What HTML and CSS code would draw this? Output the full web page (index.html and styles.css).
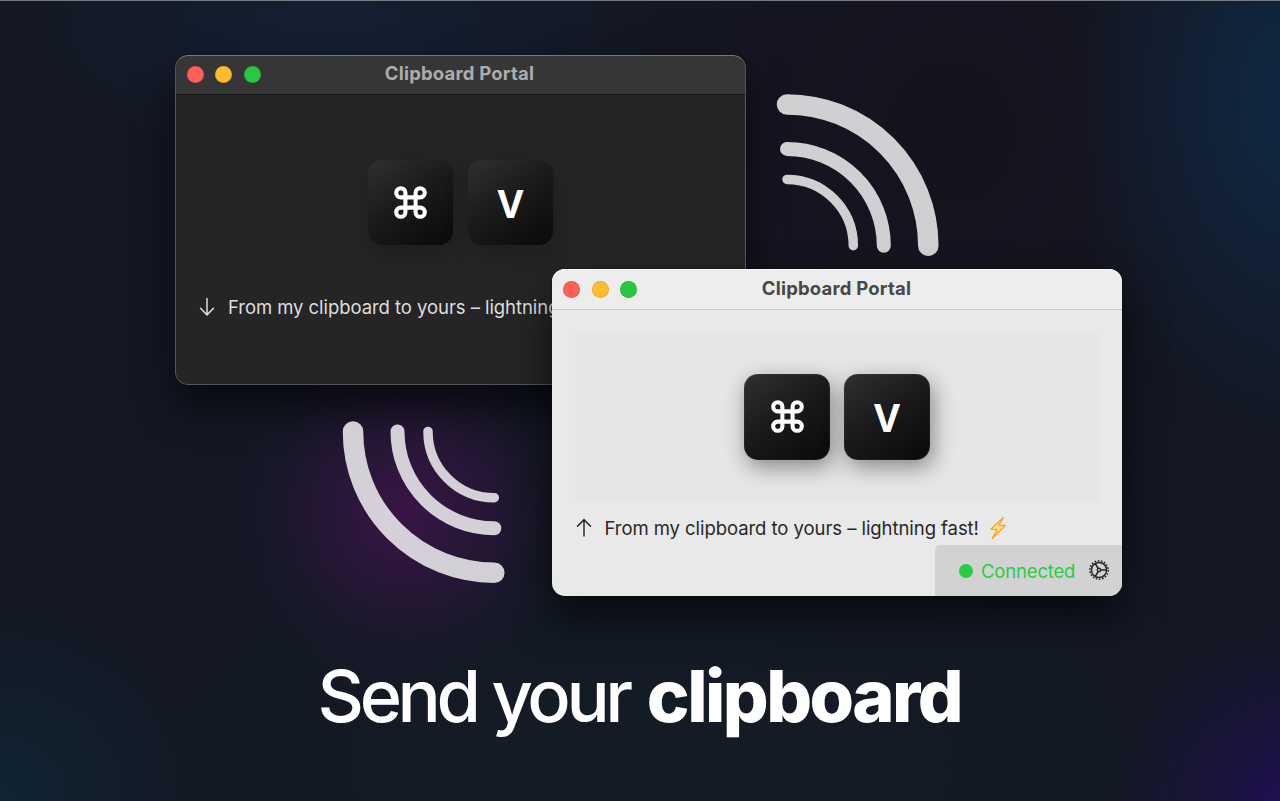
FILE: index.html
```html
<!DOCTYPE html>
<html lang="en">
<head>
<meta charset="utf-8">
<title>Clipboard Portal</title>
<link rel="stylesheet" href="styles.css">
</head>
<body>
<svg class="defs" width="0" height="0" aria-hidden="true">
  <symbol id="command" viewBox="0 0 33 33"><path d="M11.4 6.8a4.6 4.6 0 1 0-4.6 4.6H26.2a4.6 4.6 0 1 0-4.6-4.6V26.2a4.6 4.6 0 1 0 4.6-4.6H6.8a4.6 4.6 0 1 0 4.6 4.6Z" fill="none" stroke="#fff" stroke-width="4.1"/></symbol>
</svg>
<main class="desktop">
  <section class="window dark">
    <header class="titlebar">
      <div class="lights"><i class="red"></i><i class="yellow"></i><i class="green"></i></div>
      <h2 class="title"><span>Clipboard Portal</span></h2>
    </header>
    <div class="preview">
      <div class="key"><svg class="cmd"><use href="#command"/></svg></div>
      <div class="key"><span>V</span></div>
    </div>
    <div class="message">
      <svg class="arrow" viewBox="0 0 16 20"><path d="M8 1.5V17.5M1.5 11.3L8 17.9L14.5 11.3"/></svg>
      <span class="text">From my clipboard to yours – lightning fast!</span>
    </div>
  </section>

  <svg class="waves waves-top" viewBox="0 0 164 164"><path d="M11 11.400A141.300 141.300 0 0 1 152.300 152.700" stroke-width="20.500"/><path d="M11 55.900A96.800 96.800 0 0 1 107.800 152.700" stroke-width="14"/><path d="M11 86.400A66.300 66.300 0 0 1 77.300 152.700" stroke-width="9.500"/></svg>
  <svg class="waves waves-bottom" viewBox="0 0 164 164"><path d="M11 11.400A141.300 141.300 0 0 0 152.300 152.700" stroke-width="20.500"/><path d="M55.500 11.400A96.800 96.800 0 0 0 152.300 108.200" stroke-width="14"/><path d="M86 11.400A66.300 66.300 0 0 0 152.300 77.700" stroke-width="9.500"/></svg>

  <section class="window light">
    <header class="titlebar">
      <div class="lights"><i class="red"></i><i class="yellow"></i><i class="green"></i></div>
      <h2 class="title"><span>Clipboard Portal</span></h2>
    </header>
    <div class="preview">
      <div class="key"><svg class="cmd"><use href="#command"/></svg></div>
      <div class="key"><span>V</span></div>
    </div>
    <div class="message">
      <svg class="arrow" viewBox="0 0 16 20"><path d="M8 18V2M1.500 8.200L8 1.600L14.500 8.200"/></svg>
      <span class="text">From my clipboard to yours – lightning fast!</span>
      <svg class="bolt" viewBox="0 0 18 24"><path d="M14.500 1.500L1.800 13.200L8 13.700L3.200 22.500L16.300 9.600L9.800 9.200Z"/></svg>
    </div>
    <footer class="status">
      <i class="dot"></i>
      <span class="state">Connected</span>
      <svg class="gear" viewBox="0 0 20 20"><circle class="teeth" cx="10" cy="10" r="9.200"/><circle cx="10" cy="10" r="7.600"/><circle cx="10" cy="10" r="1.700"/><path d="M11.700 10H17.500M9.200 8.500L6.200 3.500M9.200 11.500L6.200 16.500"/></svg>
    </footer>
  </section>

  <h1 class="headline"><span class="lead">Send your</span><strong>clipboard</strong></h1>
</main>
</body>
</html>
```
FILE: styles.css
```css
* { box-sizing: border-box; }
body { margin: 0; font-family: Inter, "Liberation Sans", sans-serif; }
.defs { position: absolute; }
.desktop {
  position: relative;
  width: 1280px;
  height: 801px;
  overflow: hidden;
  border-top: 1px solid #757a83;
  background:
    radial-gradient(circle 175px at 405px 510px, rgba(58, 21, 71, .95), rgba(54, 21, 68, .6) 40%, rgba(46, 21, 60, .2) 75%, transparent),
    radial-gradient(ellipse 220px 330px at 1290px 100px, #102842, rgba(16, 38, 62, .65) 45%, transparent),
    radial-gradient(circle 180px at 1295px 805px, #200f54, rgba(30, 16, 76, .5) 50%, transparent),
    radial-gradient(circle 200px at 0 800px, #102433, transparent),
    radial-gradient(ellipse 300px 130px at 330px 20px, #142033, transparent),
    radial-gradient(ellipse 380px 420px at 950px 130px, #16121d, transparent),
    radial-gradient(ellipse 600px 280px at 650px 760px, #131c26, transparent),
    #131824;
}
.window {
  position: absolute;
  display: flex;
  flex-direction: column;
  width: 570px;
  border-radius: 13px;
  overflow: hidden;
}
.window::after {
  content: "";
  position: absolute;
  inset: 0;
  border-radius: inherit;
  pointer-events: none;
}
.dark {
  left: 175px;
  top: 54px;
  width: 571px;
  height: 330px;
  background: #252525;
  color: #dedede;
  box-shadow: 0 0 1px #000, 0 22px 42px rgba(0, 0, 0, .62);
}
.dark::after { border: 1.300px solid #565656; border-top-color: #777; }
.light {
  left: 552px;
  top: 268px;
  height: 327px;
  background: #e9e9e9;
  color: #282828;
  box-shadow: 0 0 1px #000, 0 22px 42px rgba(0, 0, 0, .6);
}
.light::after { box-shadow: inset 0 1px 0 #f8f8f8; }
.titlebar {
  display: grid;
  grid-template-columns: 96px 1fr 96px;
  align-items: center;
  flex: none;
  height: 41px;
  border-bottom: 1px solid #c8c8c8;
  background: #ededed;
}
.dark .titlebar { height: 40px; border-bottom-color: #161616; background: #363636; }
.lights { display: flex; gap: 11.500px; padding-left: 11px; }
.dark .lights { padding-left: 11.500px; }
.lights i { width: 17px; height: 17px; border-radius: 50%; box-shadow: inset 0 0 0 .7px rgba(0, 0, 0, .12); }
.red { background: #ff5f57; }
.yellow { background: #febc2e; }
.green { background: #28c840; }
.title {
  margin: 0 2px 2px 0;
  text-align: center;
  font-size: 18.500px;
  font-weight: 700;
  line-height: 24px;
  letter-spacing: .2px;
  color: #acacac;
}
.dark .title { margin-bottom: 3px; }
.light .title { margin-right: 1px; color: #484848; }
.preview {
  display: flex;
  justify-content: center;
  align-items: center;
  gap: 14.500px;
  flex: none;
  height: 170px;
  margin: 22px 23px 0;
}
.dark .preview { height: 171px; }
.light .preview { background: #e6e6e6; }
.key {
  display: flex;
  justify-content: center;
  align-items: center;
  width: 85.500px;
  height: 85.500px;
  border-radius: 14px;
  background: linear-gradient(145deg, #303030, #1b1b1b 45%, #090909);
  color: #fff;
  font: 700 40px/56px "Noto Sans", sans-serif;
  box-shadow: 2px 7px 24px rgba(0, 0, 0, .22);
}
.light .key { padding-bottom: 1px; box-shadow: inset 0 0 1px #888, 3px 7px 22px rgba(0, 0, 0, .42); }
.cmd { width: 33px; height: 33px; }
.message {
  display: flex;
  align-items: center;
  flex: none;
  height: 24px;
  margin-top: 14px;
  padding-left: 23.500px;
  font-size: 18.500px;
  letter-spacing: -.06px;
  white-space: nowrap;
}
.dark .message { margin-top: 7px; padding-left: 24px; }
.arrow { width: 16px; height: 20px; margin-right: 13px; fill: none; stroke: currentColor; stroke-width: 1.500; stroke-linecap: round; }
.bolt { width: 18px; height: 24px; margin-left: 10px; fill: #ffe08a; stroke: #ff9f0a; stroke-width: 1.200; stroke-linejoin: round; }
.status {
  display: flex;
  align-items: center;
  width: 187px;
  height: 51px;
  margin: auto 0 0 auto;
  padding-left: 24px;
  border-radius: 5px 0 0;
  background: #d2d2d2;
}
.dot { width: 14px; height: 14px; border-radius: 50%; background: #28cd41; }
.state { margin-left: 8px; font-size: 18.500px; letter-spacing: -.17px; color: #28cd41; }
.gear { width: 20px; height: 20px; margin: 0 0 1px 13.500px; fill: none; stroke: #282828; stroke-width: 1.500; }
.gear .teeth { stroke-width: 1.500; stroke-dasharray: 1.605 1.606; }
.waves { position: absolute; width: 164px; height: 164px; fill: none; stroke: rgba(255, 255, 255, .8); stroke-linecap: round; }
.waves-top { left: 776px; top: 92px; }
.waves-bottom { left: 342px; top: 419px; }
.headline {
  display: flex;
  gap: 18px;
  margin: 651px 0 0 317.500px;
  font-size: 72px;
  font-weight: 500;
  line-height: 88px;
  letter-spacing: -4.350px;
  color: #fff;
  white-space: nowrap;
}
.headline strong { font-weight: 800; letter-spacing: -2.550px; }
```
